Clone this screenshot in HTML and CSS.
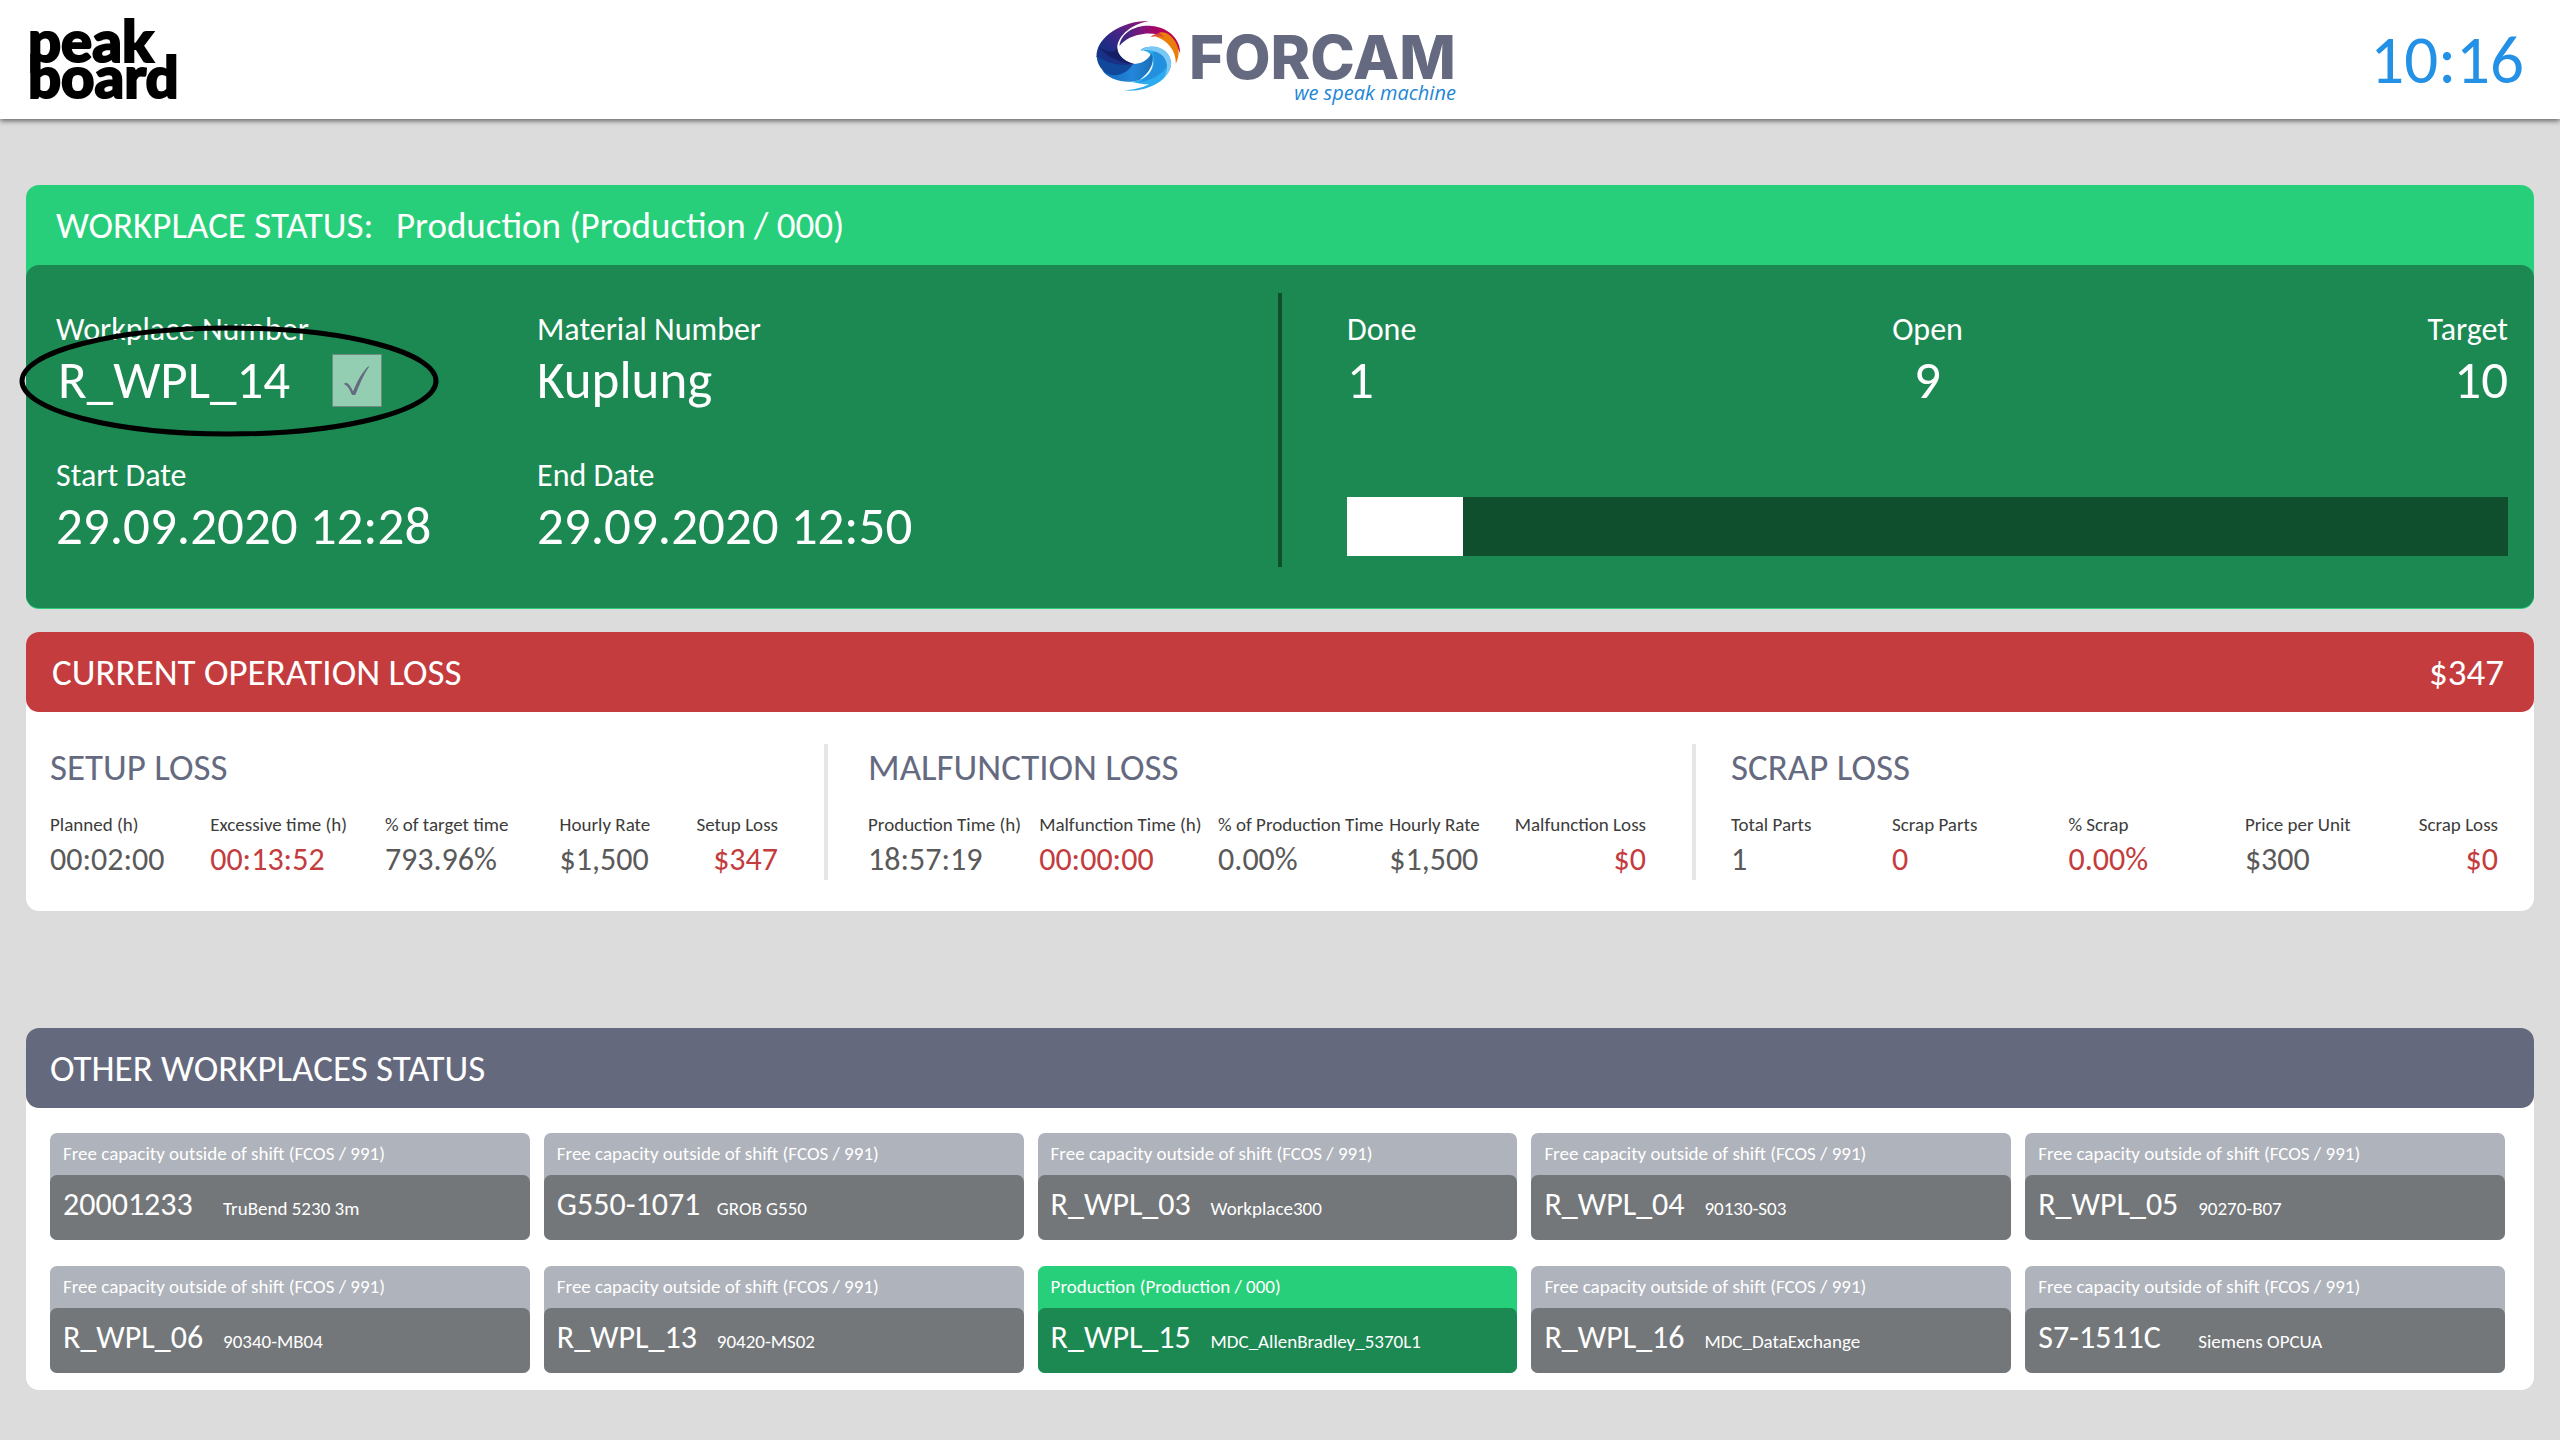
FILE: index.html
```html
<!DOCTYPE html>
<html lang="en">
<head>
<meta charset="utf-8">
<title>Workplace status</title>
<link rel="stylesheet" href="styles.css">
</head>
<body>
<header class="topbar">
  <div class="peakboard">peak<br>board</div>
  <div class="forcam">
    <svg class="swirl" viewBox="54 58 254 216" aria-hidden="true">
      <defs>
        <linearGradient id="navy" x1="1" y1="0" x2="0" y2="1">
          <stop offset="0" stop-color="#a01074"/><stop offset=".4" stop-color="#4a2486"/><stop offset=".7" stop-color="#1c2c84"/><stop offset="1" stop-color="#12398c"/>
        </linearGradient>
        <linearGradient id="ribbon" x1="0" y1="0" x2="1" y2="0">
          <stop offset="0" stop-color="#2f2a86"/><stop offset=".4" stop-color="#85147c"/><stop offset=".7" stop-color="#b5005a"/><stop offset="1" stop-color="#c00848"/>
        </linearGradient>
        <linearGradient id="wave" x1="0" y1="0" x2="1" y2="0">
          <stop offset="0" stop-color="#1568b8"/><stop offset=".6" stop-color="#2386da"/><stop offset="1" stop-color="#1a6fb5"/>
        </linearGradient>
      </defs>
      <path fill="#2cabf0" d="M138 269C200 277 277 242 279 187C277 157 250 136 215 138C200 139 190 144 187 149C214 149 228 170 224 190C222 222 190 240 160 244C190 250 200 252 214 250C190 262 165 268 138 269Z"/>
      <path fill="url(#wave)" d="M72 208C90 240 150 251 184 238C218 215 232 180 220 158C208 180 190 190 165 190C150 215 110 228 72 208Z"/>
      <path fill="#2390df" d="M222 156C238 185 224 222 180 246C215 240 262 222 272 182C268 160 245 150 222 156Z"/>
      <path fill="#7cc8f4" d="M186 150C205 132 268 130 279 184C280 205 268 222 258 230C278 195 262 160 228 152C214 148 200 147 186 150Z"/>
      <path fill="url(#navy)" d="M213 61C140 58 54 105 55 168C80 192 130 202 168 190C130 180 113 155 118 132C128 95 170 68 213 61Z"/>
      <path fill="#151f66" d="M61 138C82 165 125 187 168 190C135 182 116 160 117 140C112 160 88 155 61 138Z"/>
      <path fill="#11489c" d="M55 165C58 200 80 223 110 224C137 222 155 206 166 190C130 196 85 190 55 165Z"/>
      <path fill="url(#ribbon)" d="M124 136C128 95 175 72 220 76C270 80 307 115 306 158C290 118 250 96 200 99C165 103 140 115 124 136Z"/>
      <path fill="#ea7d0c" d="M243 96C262 92 275 101 288 118C305 143 305 165 293 189C294 150 268 118 232 108C238 106 240 103 243 96Z"/>
      <path fill="#dd4a3c" d="M217 109C226 102 236 98 246 98L258 109C244 106 230 107 217 109Z"/>
    </svg>
    <div class="forcam-text">
      <div class="forcam-name">FORCAM</div>
      <div class="forcam-tag">we speak machine</div>
    </div>
  </div>
  <time class="clock">10:16</time>
</header>

<main class="board">
  <section class="status">
    <h2 class="bar bar-status"><span class="bar-label">WORKPLACE STATUS:</span><span>Production (Production / 000)</span></h2>
    <div class="status-body">
      <div class="facts">
        <div class="fact picked">
          <div class="label">Workplace Number</div>
          <div class="value confirm"><span>R_WPL_14</span>
            <button class="check" type="button" aria-label="Confirm workplace"><svg viewBox="0 0 50 53" aria-hidden="true"><path d="M12 30C15 28 17 31 21 39C25 29 29 20 37 12C31 21 27 31 23 41L20 41C18 36 16 32 12 30Z"/></svg></button>
          </div>
          <svg class="ring" viewBox="0 0 420 112" aria-hidden="true"><ellipse cx="210" cy="56" rx="207" ry="53"/></svg>
        </div>
        <div class="fact"><div class="label">Material Number</div><div class="value">Kuplung</div></div>
        <div class="fact"><div class="label">Start Date</div><div class="value">29.09.2020 12:28</div></div>
        <div class="fact"><div class="label">End Date</div><div class="value">29.09.2020 12:50</div></div>
      </div>
      <div class="output">
        <div class="counts">
          <div><div class="label">Done</div><div class="value">1</div></div>
          <div class="mid"><div class="label">Open</div><div class="value">9</div></div>
          <div class="end"><div class="label">Target</div><div class="value">10</div></div>
        </div>
        <progress class="progress" value="1" max="10" aria-label="Parts done"></progress>
      </div>
    </div>
  </section>

  <section class="panel losses">
    <h2 class="bar bar-loss"><span>CURRENT OPERATION LOSS</span><span>$347</span></h2>
    <div class="loss-grid">
      <div class="loss setup">
        <h3>SETUP LOSS</h3>
        <table>
          <thead><tr><th>Planned (h)</th><th>Excessive time (h)</th><th>% of target time</th><th>Hourly Rate</th><th>Setup Loss</th></tr></thead>
          <tbody><tr><td>00:02:00</td><td class="bad">00:13:52</td><td>793.96%</td><td>$1,500</td><td class="bad">$347</td></tr></tbody>
        </table>
      </div>
      <div class="loss malfunction">
        <h3>MALFUNCTION LOSS</h3>
        <table>
          <thead><tr><th>Production Time (h)</th><th>Malfunction Time (h)</th><th>% of Production Time</th><th>Hourly Rate</th><th>Malfunction Loss</th></tr></thead>
          <tbody><tr><td>18:57:19</td><td class="bad">00:00:00</td><td>0.00%</td><td>$1,500</td><td class="bad">$0</td></tr></tbody>
        </table>
      </div>
      <div class="loss scrap">
        <h3>SCRAP LOSS</h3>
        <table>
          <thead><tr><th>Total Parts</th><th>Scrap Parts</th><th>% Scrap</th><th>Price per Unit</th><th>Scrap Loss</th></tr></thead>
          <tbody><tr><td>1</td><td class="bad">0</td><td class="bad">0.00%</td><td>$300</td><td class="bad">$0</td></tr></tbody>
        </table>
      </div>
    </div>
  </section>

  <section class="panel others">
    <h2 class="bar bar-others">OTHER WORKPLACES STATUS</h2>
    <div class="places">
      <article class="place"><div class="state">Free capacity outside of shift (FCOS / 991)</div><div class="who"><span class="id">20001233</span><span class="desc">TruBend 5230 3m</span></div></article>
      <article class="place"><div class="state">Free capacity outside of shift (FCOS / 991)</div><div class="who"><span class="id">G550-1071</span><span class="desc">GROB G550</span></div></article>
      <article class="place"><div class="state">Free capacity outside of shift (FCOS / 991)</div><div class="who"><span class="id">R_WPL_03</span><span class="desc">Workplace300</span></div></article>
      <article class="place"><div class="state">Free capacity outside of shift (FCOS / 991)</div><div class="who"><span class="id">R_WPL_04</span><span class="desc">90130-S03</span></div></article>
      <article class="place"><div class="state">Free capacity outside of shift (FCOS / 991)</div><div class="who"><span class="id">R_WPL_05</span><span class="desc">90270-B07</span></div></article>
      <article class="place"><div class="state">Free capacity outside of shift (FCOS / 991)</div><div class="who"><span class="id">R_WPL_06</span><span class="desc">90340-MB04</span></div></article>
      <article class="place"><div class="state">Free capacity outside of shift (FCOS / 991)</div><div class="who"><span class="id">R_WPL_13</span><span class="desc">90420-MS02</span></div></article>
      <article class="place running"><div class="state">Production (Production / 000)</div><div class="who"><span class="id">R_WPL_15</span><span class="desc">MDC_AllenBradley_5370L1</span></div></article>
      <article class="place"><div class="state">Free capacity outside of shift (FCOS / 991)</div><div class="who"><span class="id">R_WPL_16</span><span class="desc">MDC_DataExchange</span></div></article>
      <article class="place"><div class="state">Free capacity outside of shift (FCOS / 991)</div><div class="who"><span class="id">S7-1511C</span><span class="desc">Siemens OPCUA</span></div></article>
    </div>
  </section>
</main>
</body>
</html>
```
FILE: styles.css
```css
* { box-sizing: border-box; }

body {
  margin: 0;
  background: #dcdcdc;
  color: #3c3c3b;
  font-family: Carlito, Calibri, Lato, sans-serif;
}

h2, h3 { margin: 0; font-weight: 400; }

/* top bar */
.topbar {
  display: grid;
  grid-template-columns: 1fr auto 1fr;
  align-items: center;
  height: 119px;
  padding: 0 36px 0 28px;
  background: #fff;
  box-shadow: 0 2px 5px #666;
}
.peakboard {
  padding-bottom: 3px;
  color: #000;
  font-family: Lato, sans-serif;
  font-weight: 900;
  font-size: 58px;
  line-height: 36px;
  -webkit-text-stroke: 2px #000;
}
.forcam { display: flex; align-self: start; align-items: flex-start; gap: 8px; }
.swirl { width: 85px; height: 72px; margin-top: 20px; }
.forcam-text { margin-top: 31px; }
.forcam-name {
  color: #656a80;
  font-family: Inter, sans-serif;
  font-weight: 800;
  font-size: 60px;
  line-height: 52px;
}
.forcam-tag {
  color: #1e86d6;
  font-family: "Open Sans", sans-serif;
  font-style: italic;
  font-size: 20px;
  line-height: 20px;
  text-align: right;
}
.clock { justify-self: end; color: #2391e6; font-size: 67px; line-height: 80px; }

.board { padding: 66px 26px 50px; }

/* section bars */
.bar {
  display: flex;
  align-items: center;
  height: 80px;
  padding-top: 2px;
  font-size: 37px;
  line-height: 40px;
  color: #fff;
}
.bar-status { padding-left: 30px; }
.bar-label { flex: 0 0 340px; }
.bar-loss { justify-content: space-between; padding-left: 26px; padding-right: 30px; border-radius: 13px; background: #c43c3e; }
.bar-others { padding-left: 24px; border-radius: 13px; background: #65697d; }

/* current workplace */
.status { padding-bottom: 1px; border-radius: 13px; background: #28cf7a; }
.status-body {
  display: grid;
  grid-template-columns: 1222fr 1230fr;
  padding: 28px 26px 41px 30px;
  border-radius: 13px;
  background: #1c8852;
  color: #fff;
}
.facts {
  display: grid;
  grid-template-columns: 481px 1fr;
  row-gap: 49px;
  padding: 18px 0 13px;
}
.fact { position: relative; }
.label { font-size: 32px; line-height: 38px; }
.value { margin-top: 3px; font-size: 53px; line-height: 56px; }
.confirm { display: flex; align-items: center; gap: 42px; padding-left: 2px; }
.check { width: 50px; height: 53px; padding: 0; border: 1px solid #6f8c80; background: #94ceb2; }
.check svg { display: block; width: 100%; height: 100%; }
.check path { fill: #656a80; stroke: #656a80; stroke-width: 1; }
.ring { position: absolute; left: -37px; top: 14px; width: 420px; height: 112px; pointer-events: none; }
.ring ellipse { fill: none; stroke: #000; stroke-width: 5; }
.output {
  display: flex;
  flex-direction: column;
  justify-content: space-between;
  padding: 18px 0 11px 65px;
  border-left: 4px solid #104f2e;
}
.counts { display: grid; grid-template-columns: 1fr auto 1fr; }
.mid { text-align: center; }
.end { text-align: right; }
.progress { display: block; width: 100%; height: 59px; appearance: none; border: 0; background: #104f2e; }
.progress::-webkit-progress-bar { background: #104f2e; }
.progress::-webkit-progress-value { background: #fff; }

/* losses */
.panel { border-radius: 13px; background: #fff; }
.losses { margin-top: 23px; }
.loss-grid { display: grid; grid-template-columns: 802fr 868fr 838fr; padding: 32px 0 31px; }
.loss { padding: 4px 46px 2px 40px; border-right: 4px solid #e6e6e6; }
.setup { padding-left: 24px; }
.scrap { padding-left: 35px; padding-right: 36px; border-right: 0; }
.loss h3 { font-size: 37px; line-height: 40px; color: #656a80; }
.loss table { width: 100%; margin-top: 24px; table-layout: fixed; border-collapse: collapse; }
.loss th, .loss td { padding: 0; text-align: left; white-space: nowrap; }
.loss th { height: 30px; font-weight: 400; font-size: 19px; line-height: 26px; vertical-align: top; }
.loss td { font-size: 32px; line-height: 36px; color: #5a5a5a; }
.loss td.bad { color: #c43c3e; }
.loss th:last-child, .loss td:last-child { text-align: right; }
.loss th:nth-child(1) { width: 22%; }
.loss th:nth-child(2) { width: 23%; }
.loss th:nth-child(3) { width: 22%; }
.loss th:nth-child(4) { width: 13%; }
.setup th:nth-child(2), .setup th:nth-child(3) { width: 24%; }
.scrap th:nth-child(1) { width: 21%; }
.scrap th:nth-child(3) { width: 23%; }

/* other workplaces */
.others { margin-top: 117px; }
.places { display: grid; grid-template-columns: repeat(5, 1fr); gap: 26px 14px; padding: 25px 29px 17px 24px; }
.place { border-radius: 7px; background: #afb3bb; color: #fff; }
.state { height: 42px; padding: 0 13px; font-size: 19px; line-height: 41px; }
.who {
  display: flex;
  align-items: baseline;
  height: 65px;
  padding: 10px 13px;
  border-radius: 7px;
  background: #73777a;
}
.id { flex: 0 0 160px; font-size: 32px; line-height: 40px; }
.desc { font-size: 19px; }
.running { background: #28cf7a; }
.running .who { background: #1c8852; }
```
